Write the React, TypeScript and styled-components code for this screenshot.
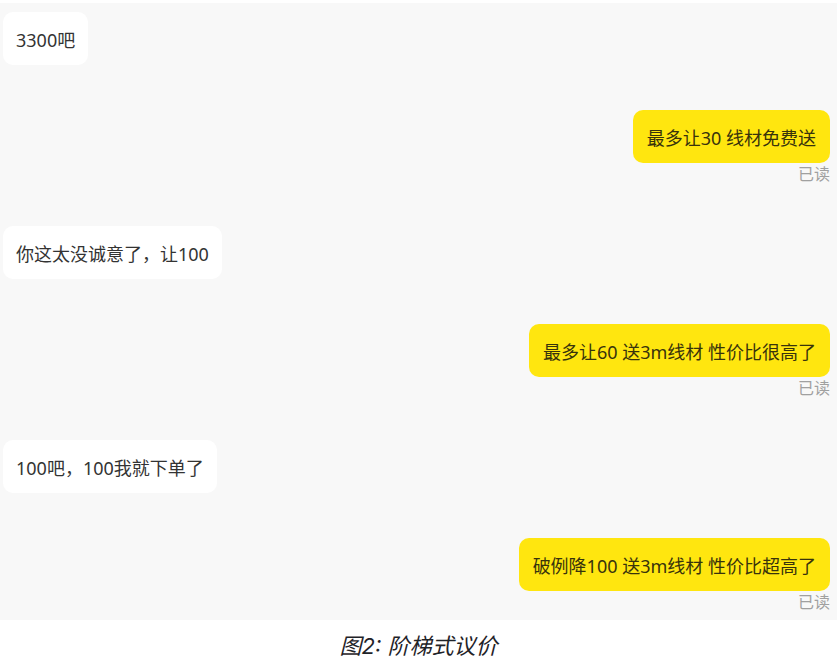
import React from "react";
import styled, { createGlobalStyle } from "styled-components";

const GlobalStyle = createGlobalStyle`
  * { box-sizing: border-box; }
  body { margin: 0; background: #fff; }
`;

const Figure = styled.figure`
  margin: 0;
  padding-top: 3px;
  font-family: "Noto Sans", "Noto Sans CJK SC", sans-serif;
`;

const Chat = styled.ol`
  margin: 0;
  padding: 9px 7px 7px 3px;
  list-style: none;
  background: #f8f8f8;
`;

const Message = styled.li<{ $own: boolean }>`
  display: flex;
  flex-direction: column;
  align-items: ${(p) => (p.$own ? "flex-end" : "flex-start")};
  margin-top: ${(p) => (p.$own ? "45px" : "41px")};
  &:first-child { margin-top: 0; }
`;

const Bubble = styled.p<{ $own: boolean }>`
  margin: 0;
  padding: ${(p) => (p.$own ? "14px 14px 11px" : "14px 13px 11px")};
  border-radius: 10px;
  background: ${(p) => (p.$own ? "#ffe60f" : "#ffffff")};
  color: ${(p) => (p.$own ? "#38330c" : "#333")};
  font-size: 18px;
  line-height: 28px;
`;

const Receipt = styled.span`
  color: #a0a0a0;
  font-size: 16px;
  line-height: 22px;
`;

const Caption = styled.figcaption`
  padding-top: 12px;
  color: #1f2328;
  font-family: Inter, "Noto Sans CJK SC", sans-serif;
  font-size: 22px;
  font-style: italic;
  line-height: 28px;
  text-align: center;
`;

const messages = [
  { own: false, text: "3300吧" },
  { own: true, text: "最多让30 线材免费送" },
  { own: false, text: "你这太没诚意了，让100" },
  { own: true, text: "最多让60 送3m线材 性价比很高了" },
  { own: false, text: "100吧，100我就下单了" },
  { own: true, text: "破例降100 送3m线材 性价比超高了" },
];

export default function App() {
  return (
    <Figure lang="zh-CN">
      <GlobalStyle />
      <Chat>
        {messages.map((m) => (
          <Message key={m.text} $own={m.own}>
            <Bubble $own={m.own}>{m.text}</Bubble>
            {m.own && <Receipt>已读</Receipt>}
          </Message>
        ))}
      </Chat>
      <Caption>图2: 阶梯式议价</Caption>
    </Figure>
  );
}
